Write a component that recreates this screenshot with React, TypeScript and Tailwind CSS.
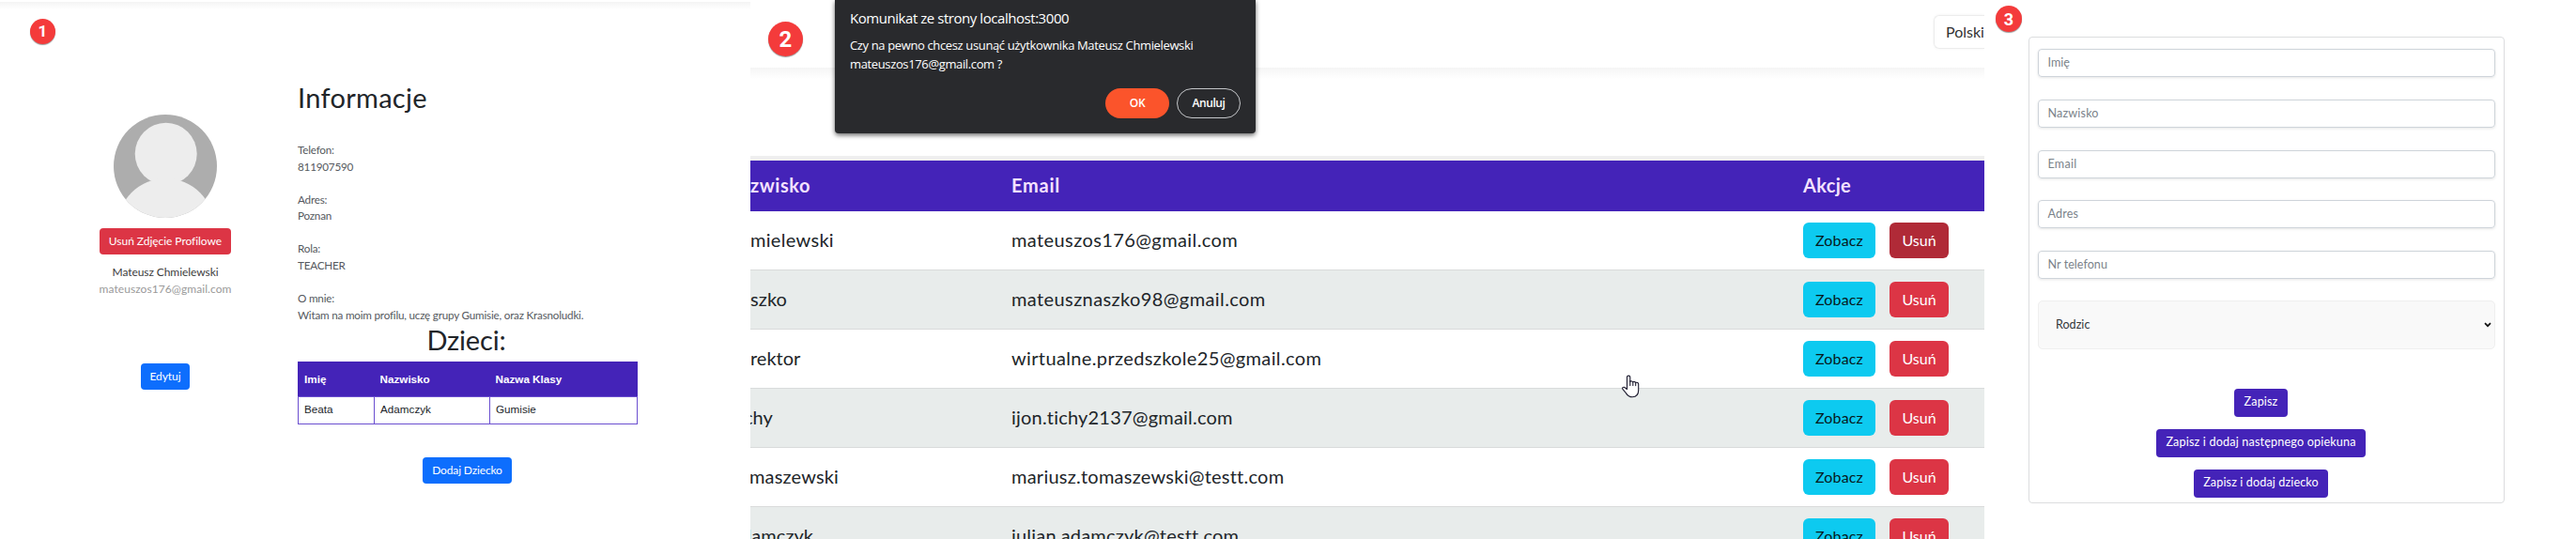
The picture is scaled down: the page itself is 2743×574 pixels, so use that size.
import type { ReactNode } from "react";

function Badge({ children, className }: { children: ReactNode; className: string }) {
  return (
    <div
      className={`absolute flex items-center justify-center rounded-full bg-[#f43b3b] font-['Roboto',sans-serif] font-bold text-white shadow-[0_1px_1px_rgba(0,0,0,0.4)] ${className}`}
    >
      {children}
    </div>
  );
}

function Avatar() {
  return (
    <svg viewBox="0 0 110 110" className="h-[110px] w-[110px] rounded-full">
      <rect width="110" height="110" fill="#adadad" />
      <circle cx="55.7" cy="41.8" r="33" fill="#ededed" />
      <circle cx="55.5" cy="119.7" r="51.7" fill="#ededed" />
    </svg>
  );
}

const details = [
  { label: "Telefon:", value: "811907590" },
  { label: "Adres:", value: "Poznan" },
  { label: "Rola:", value: "TEACHER" },
  { label: "O mnie:", value: "Witam na moim profilu, uczę grupy Gumisie, oraz Krasnoludki." },
];

function ProfilePanel() {
  return (
    <section className="relative h-full w-[799px] shrink-0 text-[11.7px] leading-[17.6px]">
      <div className="absolute inset-x-0 top-[2px] h-[8px] bg-linear-to-b from-[#f4f4f4] to-white" />
      <Badge className="left-[32px] top-[20px] h-[27px] w-[27px] text-[17px]">1</Badge>
      <div className="flex">
        <div className="flex w-[317px] shrink-0 flex-col items-center pl-[35px] pt-[122px]">
          <Avatar />
          <button className="mt-[11px] h-[28px] w-[140px] rounded-[4px] bg-[#dc3545] text-[12px] tracking-[-0.004em] text-white">
            Usuń Zdjęcie Profilowe
          </button>
          <div className="mt-[10px] text-[12px] tracking-[-0.006em] text-[#3c3c3c]">Mateusz Chmielewski</div>
          <div className="text-[12px] tracking-[0.006em] text-[#9a9a9a]">mateuszos176@gmail.com</div>
          <button className="mt-[71px] h-[28px] w-[52px] rounded-[4px] bg-[#0d6efd] text-[12px] tracking-[-0.006em] text-white">
            Edytuj
          </button>
        </div>
        <div className="w-[362px] pt-[86px]">
          <h1 className="text-[29px] leading-[35px] tracking-[0.01em] text-[#212529]">Informacje</h1>
          <div className="mt-[30px] flex flex-col gap-[17.5px] tracking-[-0.018em] text-[#55595e]">
            {details.map((d) => (
              <div key={d.label}>
                <div>{d.label}</div>
                <div className="whitespace-nowrap">{d.value}</div>
              </div>
            ))}
          </div>
          <h1 className="pr-[3px] text-center text-[29px] leading-[35px] tracking-[-0.005em] text-[#212529]">Dzieci:</h1>
          <table className="mt-[6px] w-[362px] table-fixed border-collapse border border-[#4423b8] text-left font-['Liberation_Sans',sans-serif] text-[#212529]">
            <colgroup>
              <col className="w-[81px]" />
              <col className="w-[123px]" />
              <col />
            </colgroup>
            <thead>
              <tr className="h-[37px] bg-[#4423b8] text-white">
                <th className="pl-[6px]">Imię</th>
                <th className="pl-[6px]">Nazwisko</th>
                <th className="pl-[6px]">Nazwa Klasy</th>
              </tr>
            </thead>
            <tbody>
              <tr className="h-[29px]">
                <td className="border border-[#6b4fd0] pb-[2px] pl-[6px]">Beata</td>
                <td className="border border-[#6b4fd0] pb-[2px] pl-[6px]">Adamczyk</td>
                <td className="border border-[#6b4fd0] pb-[2px] pl-[6px]">Gumisie</td>
              </tr>
            </tbody>
          </table>
          <div className="mt-[35px] flex justify-center pr-px">
            <button className="h-[28px] w-[95px] rounded-[4px] bg-[#0d6efd] text-[12px] tracking-[-0.012em] text-white">
              Dodaj Dziecko
            </button>
          </div>
        </div>
      </div>
    </section>
  );
}

const users = [
  { name: "mielewski", email: "mateuszos176@gmail.com", nameClass: "tracking-[0.015em]", emailClass: "tracking-[0.02em]", active: true },
  { name: "szko", email: "mateusznaszko98@gmail.com", nameClass: "tracking-[0.005em]", emailClass: "tracking-[0.02em]" },
  { name: "rektor", email: "wirtualne.przedszkole25@gmail.com", nameClass: "", emailClass: "tracking-[0.018em]" },
  { name: "chy", email: "ijon.tichy2137@gmail.com", nameClass: "-ml-[7px]", emailClass: "tracking-[0.01em]" },
  { name: "maszewski", email: "mariusz.tomaszewski@testt.com", nameClass: "-ml-[1px] tracking-[0.008em]", emailClass: "tracking-[0.012em]" },
  { name: "damczyk", email: "julian.adamczyk@testt.com", nameClass: "-ml-[10px] tracking-[0.003em]", emailClass: "tracking-[0.01em]" },
];

function HandCursor() {
  return (
    <svg viewBox="0 0 19 25" className="absolute left-[928px] top-[398.5px] h-[25px] w-[19px]">
      <path
        d="M5.5 15.5V2.6c0-2 3.3-2 3.3 0v4.6c1-.5 2.7-.3 3 .6 1-.5 2.600-.2 2.900.6 1.300-.5 3 .1 3 1.500v6.400c0 4.500-2.400 7.500-6.500 7.500-4.800 0-6-3-7.400-5L.9 15.400c-.8-1.300.6-2.600 2-1.900z"
        fill="#fff"
        stroke="#1c1a2e"
        strokeWidth="1.1"
        strokeLinejoin="round"
      />
      <path d="M8.8 6.8v4.700M11.800 7.800v3.700M14.700 8.600v3" fill="none" stroke="#1c1a2e" strokeWidth="1.1" strokeLinecap="round" />
    </svg>
  );
}

function ConfirmDialog() {
  return (
    <div className="absolute left-[90px] top-0 h-[142px] w-[448px] rounded-b-[4px] bg-[#292a2d] px-[16px] font-['Open_Sans',sans-serif] text-white shadow-[0_2px_5px_rgba(0,0,0,0.6)]">
      <div className="pt-[9px] text-[15px] leading-[21px] tracking-[-0.03em]">Komunikat ze strony localhost:3000</div>
      <div className="mt-[8px] whitespace-nowrap text-[13px] leading-[20px] tracking-[-0.028em]">
        Czy na pewno chcesz usunąć użytkownika Mateusz Chmielewski
        <br />
        mateuszos176@gmail.com ?
      </div>
      <div className="mt-[16px] flex justify-end gap-2 text-[12px] font-semibold tracking-[-0.02em]">
        <button className="h-8 w-[68px] rounded-full bg-[#fb542b]">OK</button>
        <button className="h-8 w-[68px] rounded-full border border-[#c4c6c9] tracking-[-0.035em]">Anuluj</button>
      </div>
    </div>
  );
}

function UsersPanel() {
  return (
    <section className="relative flex h-full w-[1314px] shrink-0 flex-col overflow-hidden text-[20px]">
      <header className="flex h-[72px] shrink-0 justify-end pt-4">
        <div className="h-9 w-[54px] rounded-l-[6px] border border-r-0 border-[#ececec] pl-3 text-[16px] leading-[34px] text-[#333] shadow-[0_0_3px_rgba(0,0,0,0.06)]">
          Polski
        </div>
      </header>
      <div className="h-[12px] shrink-0 bg-linear-to-b from-[#f5f5f5] to-white" />
      <div className="mt-[82px] h-[5px] shrink-0 bg-[#efefef]" />
      <div className="flex h-[54px] shrink-0 items-center bg-[#4423b8] pb-[2px] font-bold text-[#f4e2ff]">
        <div className="w-[278px] tracking-[0.027em]">zwisko</div>
        <div className="w-[843px] tracking-[0.038em]">Email</div>
        <div className="tracking-[0.016em]">Akcje</div>
      </div>
      {users.map((u) => (
        <div
          key={u.email}
          className="flex h-[63px] shrink-0 items-center border-b border-[#d9dbdb] text-[#212529] even:bg-[#e8eceb]"
        >
          <div className="w-[278px] pb-[2px]">
            <div className={u.nameClass}>{u.name}</div>
          </div>
          <div className={`w-[843px] pb-[2px] ${u.emailClass}`}>{u.email}</div>
          <div className="flex gap-[15px] text-[16px]">
            <button className="h-[38px] w-[77px] rounded-[6px] bg-[#0dcaf0] tracking-[0.01em] text-[#06191d]">Zobacz</button>
            <button className={`h-[38px] w-[63px] rounded-[6px] text-white ${u.active ? "bg-[#b02a37]" : "bg-[#dc3545]"}`}>
              Usuń
            </button>
          </div>
        </div>
      ))}
      <Badge className="left-[19px] top-[23px] h-[37px] w-[37px] text-[24px]">2</Badge>
      <ConfirmDialog />
      <HandCursor />
    </section>
  );
}

const fields = [
  { label: "Imię", className: "" },
  { label: "Nazwisko", className: "tracking-[0.012em]" },
  { label: "Email", className: "tracking-[0.02em]" },
  { label: "Adres", className: "tracking-[0.01em]" },
  { label: "Nr telefonu", className: "tracking-[0.002em]" },
];

function FormPanel() {
  return (
    <section className="relative flex h-full w-[630px] shrink-0 items-start pl-[47px] pt-[39px] text-[12.6px]">
      <Badge className="left-[12px] top-[6px] h-[28px] w-[28px] text-[18px]">3</Badge>
      <form className="flex h-[497px] w-[507px] flex-col rounded-[4px] border border-[#dcdddf] px-[9px] pt-[12px]">
        <div className="flex flex-col gap-[23.8px]">
          {fields.map((f) => (
            <div
              key={f.label}
              className={`flex h-[30px] items-center rounded-[4px] border border-[#ced4da] pl-[9.5px] pt-px text-[#7b838a] shadow-[0_1px_3px_rgba(0,0,0,0.1)] ${f.className}`}
            >
              {f.label}
            </div>
          ))}
        </div>
        <div className="mt-[23px] flex h-[52px] items-center justify-between rounded-[5px] border border-[#efefef] bg-[#f9f9f9] pl-[18px] pr-[3px] text-[#33373b]">
          <span className="pt-px">Rodzic</span>
          <svg viewBox="0 0 8 6" className="h-[6px] w-[8px]">
            <path d="M1 1.2l3 3 3-3" fill="none" stroke="#111" strokeWidth="1.7" />
          </svg>
        </div>
        <div className="mt-[41.5px] flex flex-col items-center gap-[12.5px] pr-[12px] text-white">
          <button type="button" className="h-[30.5px] w-[57px] rounded-[4px] bg-[#4423b8] tracking-[0.01em]">Zapisz</button>
          <button type="button" className="h-[30.5px] w-[223px] rounded-[4px] bg-[#4423b8] tracking-[0.014em]">Zapisz i dodaj następnego opiekuna</button>
          <button type="button" className="h-[30.5px] w-[143px] rounded-[4px] bg-[#4423b8] tracking-[0.01em]">Zapisz i dodaj dziecko</button>
        </div>
      </form>
    </section>
  );
}

export default function App() {
  return (
    <main className="flex h-[574px] w-[2743px] overflow-hidden bg-white font-['Lato',sans-serif]">
      <ProfilePanel />
      <UsersPanel />
      <FormPanel />
    </main>
  );
}
